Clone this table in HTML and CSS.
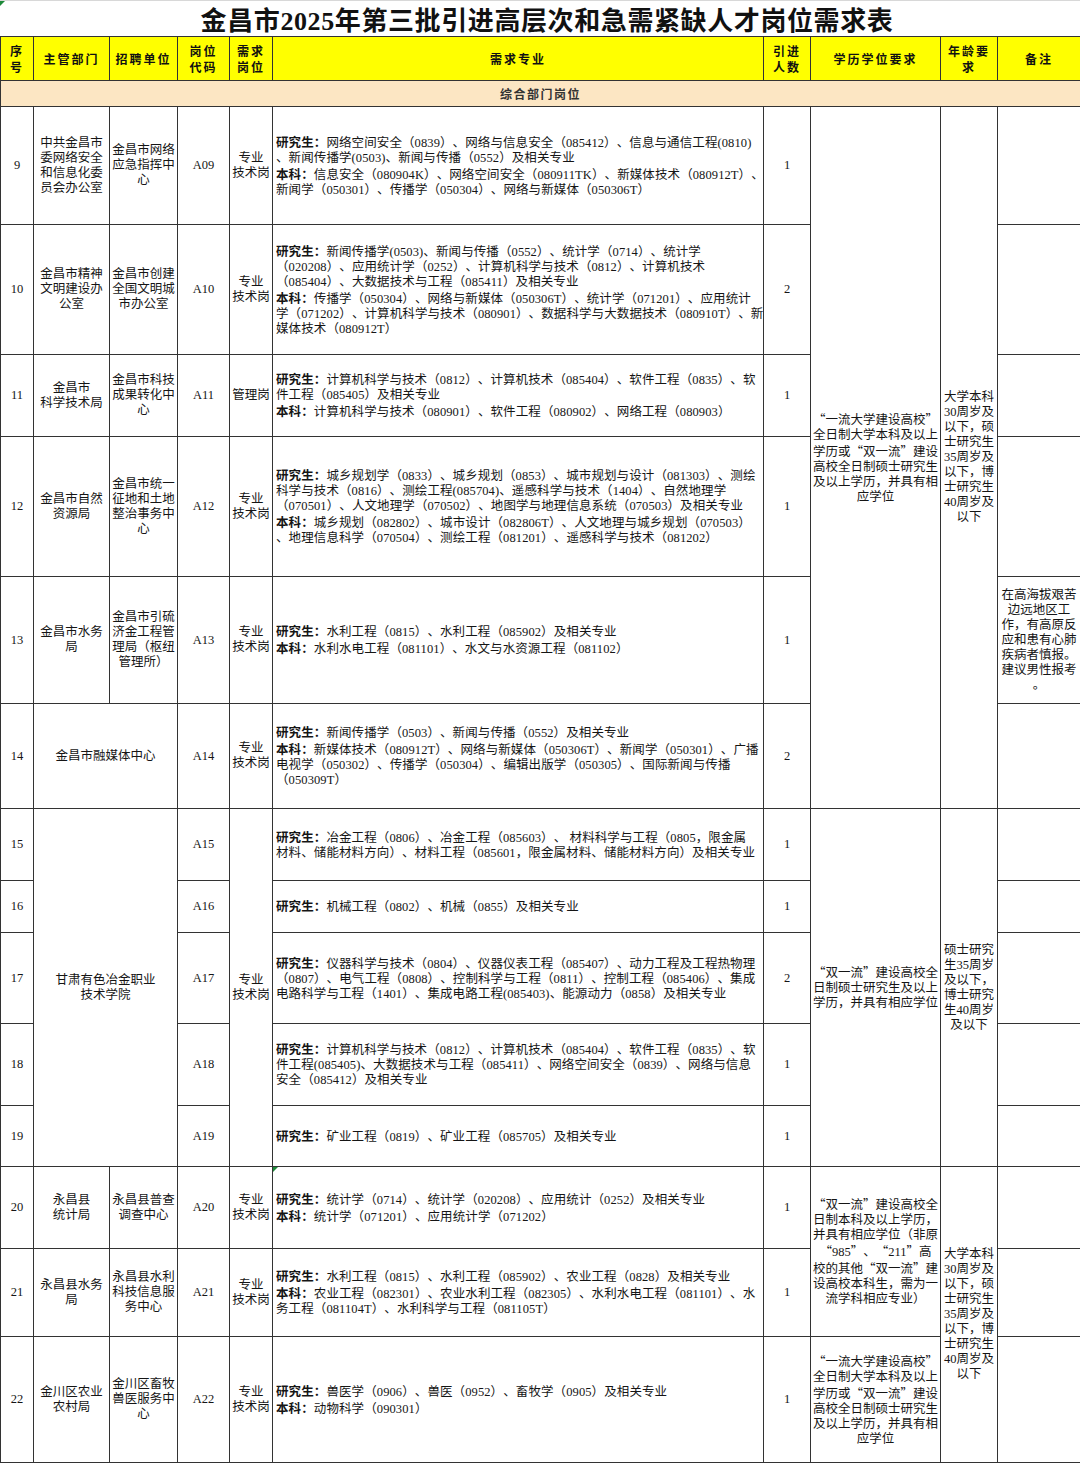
FILE: index.html
```html
<!DOCTYPE html>
<html lang="zh-CN">
<head>
<meta charset="utf-8">
<title>金昌市2025年第三批引进高层次和急需紧缺人才岗位需求表</title>
<link rel="stylesheet" href="styles.css">
</head>
<body>
<div class="title"><span class="mark"></span>金昌市2025年第三批引进高层次和急需紧缺人才岗位需求表</div>
<table class="sheet">
<colgroup>
<col class="c-no"><col class="c-dept"><col class="c-unit"><col class="c-code"><col class="c-post"><col class="c-spec"><col class="c-num"><col class="c-edu"><col class="c-age"><col class="c-note">
</colgroup>
<thead>
<tr class="r-head">
<th>序<br>号</th><th>主管部门</th><th>招聘单位</th><th>岗位<br>代码</th><th>需求<br>岗位</th><th>需求专业</th><th>引进<br>人数</th><th>学历学位要求</th><th>年龄要<br>求</th><th>备注</th>
</tr>
</thead>
<tbody>
<tr class="r-sec"><td colspan="10" class="sec">综合部门岗位</td></tr>

<tr class="r9">
<td>9</td>
<td>中共金昌市<br>委网络安全<br>和信息化委<br>员会办公室</td>
<td>金昌市网络<br>应急指挥中<br>心</td>
<td>A09</td>
<td>专业<br>技术岗</td>
<td class="spec"><b>研究生：</b>网络空间安全（0839）、网络与信息安全（085412）、信息与通信工程(0810)<br>、新闻传播学(0503)、新闻与传播（0552）及相关专业<br><b>本科：</b>信息安全（080904K）、网络空间安全（080911TK）、新媒体技术（080912T）、<br>新闻学（050301）、传播学（050304）、网络与新媒体（050306T）</td>
<td>1</td>
<td rowspan="6"><span class="q">“</span>一流大学建设高校<span class="q">”</span><br>全日制大学本科及以上<br>学历或<span class="q">“</span>双一流<span class="q">”</span>建设<br>高校全日制硕士研究生<br>及以上学历，并具有相<br>应学位</td>
<td rowspan="6">大学本科<br>30周岁及<br>以下，硕<br>士研究生<br>35周岁及<br>以下，博<br>士研究生<br>40周岁及<br>以下</td>
<td></td>
</tr>

<tr class="r10">
<td>10</td>
<td>金昌市精神<br>文明建设办<br>公室</td>
<td>金昌市创建<br>全国文明城<br>市办公室</td>
<td>A10</td>
<td>专业<br>技术岗</td>
<td class="spec"><b>研究生：</b>新闻传播学(0503)、新闻与传播（0552）、统计学（0714）、统计学<br>（020208）、应用统计学（0252）、计算机科学与技术（0812）、计算机技术<br>（085404）、大数据技术与工程（085411）及相关专业<br><b>本科：</b>传播学（050304）、网络与新媒体（050306T）、统计学（071201）、应用统计<br>学（071202）、计算机科学与技术（080901）、数据科学与大数据技术（080910T）、新<br>媒体技术（080912T）</td>
<td>2</td>
<td></td>
</tr>

<tr class="r11">
<td>11</td>
<td>金昌市<br>科学技术局</td>
<td>金昌市科技<br>成果转化中<br>心</td>
<td>A11</td>
<td>管理岗</td>
<td class="spec"><b>研究生：</b>计算机科学与技术（0812）、计算机技术（085404）、软件工程（0835）、软<br>件工程（085405）及相关专业<br><b>本科：</b>计算机科学与技术（080901）、软件工程（080902）、网络工程（080903）</td>
<td>1</td>
<td></td>
</tr>

<tr class="r12">
<td>12</td>
<td>金昌市自然<br>资源局</td>
<td>金昌市统一<br>征地和土地<br>整治事务中<br>心</td>
<td>A12</td>
<td>专业<br>技术岗</td>
<td class="spec"><b>研究生：</b>城乡规划学（0833）、城乡规划（0853）、城市规划与设计（081303）、测绘<br>科学与技术（0816）、测绘工程(085704)、遥感科学与技术（1404）、自然地理学<br>（070501）、人文地理学（070502）、地图学与地理信息系统（070503）及相关专业<br><b>本科：</b>城乡规划（082802）、城市设计（082806T）、人文地理与城乡规划（070503）<br>、地理信息科学（070504）、测绘工程（081201）、遥感科学与技术（081202）</td>
<td>1</td>
<td></td>
</tr>

<tr class="r13">
<td>13</td>
<td>金昌市水务<br>局</td>
<td>金昌市引硫<br>济金工程管<br>理局（枢纽<br>管理所）</td>
<td>A13</td>
<td>专业<br>技术岗</td>
<td class="spec"><b>研究生：</b>水利工程（0815）、水利工程（085902）及相关专业<br><b>本科：</b>水利水电工程（081101）、水文与水资源工程（081102）</td>
<td>1</td>
<td>在高海拔艰苦<br>边远地区工<br>作，有高原反<br>应和患有心肺<br>疾病者慎报。<br>建议男性报考<br>。</td>
</tr>

<tr class="r14">
<td>14</td>
<td colspan="2">金昌市融媒体中心</td>
<td>A14</td>
<td>专业<br>技术岗</td>
<td class="spec"><b>研究生：</b>新闻传播学（0503）、新闻与传播（0552）及相关专业<br><b>本科：</b>新媒体技术（080912T）、网络与新媒体（050306T）、新闻学（050301）、广播<br>电视学（050302）、传播学（050304）、编辑出版学（050305）、国际新闻与传播<br>（050309T）</td>
<td>2</td>
<td></td>
</tr>

<tr class="r15">
<td>15</td>
<td colspan="2" rowspan="5">甘肃有色冶金职业<br>技术学院</td>
<td>A15</td>
<td rowspan="5">专业<br>技术岗</td>
<td class="spec"><b>研究生：</b>冶金工程（0806）、冶金工程（085603）、 材料科学与工程（0805，限金属<br>材料、储能材料方向）、材料工程（085601，限金属材料、储能材料方向）及相关专业</td>
<td>1</td>
<td rowspan="5"><span class="q">“</span>双一流<span class="q">”</span>建设高校全<br>日制硕士研究生及以上<br>学历，并具有相应学位</td>
<td rowspan="5">硕士研究<br>生35周岁<br>及以下，<br>博士研究<br>生40周岁<br>及以下</td>
<td></td>
</tr>

<tr class="r16">
<td>16</td>
<td>A16</td>
<td class="spec"><b>研究生：</b>机械工程（0802）、机械（0855）及相关专业</td>
<td>1</td>
<td></td>
</tr>

<tr class="r17">
<td>17</td>
<td>A17</td>
<td class="spec"><b>研究生：</b>仪器科学与技术（0804）、仪器仪表工程（085407）、动力工程及工程热物理<br>（0807）、电气工程（0808）、控制科学与工程（0811）、控制工程（085406）、集成<br>电路科学与工程（1401）、集成电路工程(085403)、能源动力（0858）及相关专业</td>
<td>2</td>
<td></td>
</tr>

<tr class="r18">
<td>18</td>
<td>A18</td>
<td class="spec"><b>研究生：</b>计算机科学与技术（0812）、计算机技术（085404）、软件工程（0835）、软<br>件工程(085405)、大数据技术与工程（085411）、网络空间安全（0839）、网络与信息<br>安全（085412）及相关专业</td>
<td>1</td>
<td></td>
</tr>

<tr class="r19">
<td>19</td>
<td>A19</td>
<td class="spec"><b>研究生：</b>矿业工程（0819）、矿业工程（085705）及相关专业</td>
<td>1</td>
<td></td>
</tr>

<tr class="r20">
<td>20</td>
<td>永昌县<br>统计局</td>
<td>永昌县普查<br>调查中心</td>
<td>A20</td>
<td>专业<br>技术岗</td>
<td class="spec flag"><span class="mark"></span><b>研究生：</b>统计学（0714）、统计学（020208）、应用统计（0252）及相关专业<br><b>本科：</b>统计学（071201）、应用统计学（071202）</td>
<td>1</td>
<td rowspan="2"><span class="q">“</span>双一流<span class="q">”</span>建设高校全<br>日制本科及以上学历，<br>并具有相应学位（非原<br><span class="q">“</span>985<span class="q">”</span>、<span class="q">“</span>211<span class="q">”</span>高<br>校的其他<span class="q">“</span>双一流<span class="q">”</span>建<br>设高校本科生，需为一<br>流学科相应专业）</td>
<td rowspan="3">大学本科<br>30周岁及<br>以下，硕<br>士研究生<br>35周岁及<br>以下，博<br>士研究生<br>40周岁及<br>以下</td>
<td></td>
</tr>

<tr class="r21">
<td>21</td>
<td>永昌县水务<br>局</td>
<td>永昌县水利<br>科技信息服<br>务中心</td>
<td>A21</td>
<td>专业<br>技术岗</td>
<td class="spec"><b>研究生：</b>水利工程（0815）、水利工程（085902）、农业工程（0828）及相关专业<br><b>本科：</b>农业工程（082301）、农业水利工程（082305）、水利水电工程（081101）、水<br>务工程（081104T）、水利科学与工程（081105T）</td>
<td>1</td>
<td></td>
</tr>

<tr class="r22">
<td>22</td>
<td>金川区农业<br>农村局</td>
<td>金川区畜牧<br>兽医服务中<br>心</td>
<td>A22</td>
<td>专业<br>技术岗</td>
<td class="spec"><b>研究生：</b>兽医学（0906）、兽医（0952）、畜牧学（0905）及相关专业<br><b>本科：</b>动物科学（090301）</td>
<td>1</td>
<td><span class="q">“</span>一流大学建设高校<span class="q">”</span><br>全日制大学本科及以上<br>学历或<span class="q">“</span>双一流<span class="q">”</span>建设<br>高校全日制硕士研究生<br>及以上学历，并具有相<br>应学位</td>
<td></td>
</tr>
</tbody>
</table>
</body>
</html>
```

FILE: styles.css
```css
html, body {
  margin: 0;
  padding: 0;
  background: #ffffff;
}

body {
  width: 1080px;
  font-family: "Liberation Serif", "Noto Sans CJK SC", serif;
  color: #151515;
  text-spacing-trim: space-all;
}

.title {
  position: relative;
  height: 36px;
  display: flex;
  align-items: center;
  justify-content: center;
  padding-left: 14px;
  box-sizing: border-box;
  font-family: "Liberation Serif", "Noto Sans CJK SC", serif;
  font-size: 26px;
  font-weight: 700;
  letter-spacing: 0.6px;
  color: #111;
  border-top: 1px solid #d8d8d8;
}

.mark {
  position: absolute;
  left: 0;
  top: 0;
  width: 0;
  height: 0;
  border-top: 5px solid #1e8a3a;
  border-right: 5px solid transparent;
}

.sheet {
  border-collapse: collapse;
  table-layout: fixed;
  width: 1080px;
}

.c-no { width: 33px; }
.c-dept { width: 76px; }
.c-unit { width: 68px; }
.c-code { width: 52px; }
.c-post { width: 43px; }
.c-spec { width: 491px; }
.c-num { width: 47px; }
.c-edu { width: 130px; }
.c-age { width: 57px; }
.c-note { width: 83px; }

.sheet th,
.sheet td {
  border: 1px solid #333;
  padding: 0 1px;
  font-size: 12.5px;
  line-height: 15px;
  text-align: center;
  vertical-align: middle;
  white-space: nowrap;
  overflow: hidden;
  font-weight: 400;
}

.sheet th {
  background: #ffff00;
  font-family: "Noto Sans CJK SC", sans-serif;
  font-weight: 700;
  font-size: 12px;
  letter-spacing: 2px;
  line-height: 16px;
  color: #111;
}

.sheet td.sec {
  background: #fce6c3;
  font-family: "Noto Sans CJK SC", sans-serif;
  font-weight: 700;
  font-size: 12px;
  letter-spacing: 1.5px;
  color: #333;
}

.sheet td.spec {
  text-align: left;
  padding-left: 3px;
  letter-spacing: 0.1px;
}

.sheet td.flag {
  position: relative;
}

.spec b {
  font-family: "Noto Sans CJK SC", sans-serif;
  font-weight: 700;
}

.q {
  font-family: "Noto Sans CJK SC", sans-serif;
}

.r-head { height: 44px; }
.r-sec { height: 26px; }
.r9 { height: 118px; }
.r10 { height: 130px; }
.r11 { height: 82px; }
.r12 { height: 140px; }
.r13 { height: 127px; }
.r14 { height: 105px; }
.r15 { height: 72px; }
.r16 { height: 52px; }
.r17 { height: 91px; }
.r18 { height: 82px; }
.r19 { height: 61px; }
.r20 { height: 82px; }
.r21 { height: 88px; }
.r22 { height: 126px; }
```
